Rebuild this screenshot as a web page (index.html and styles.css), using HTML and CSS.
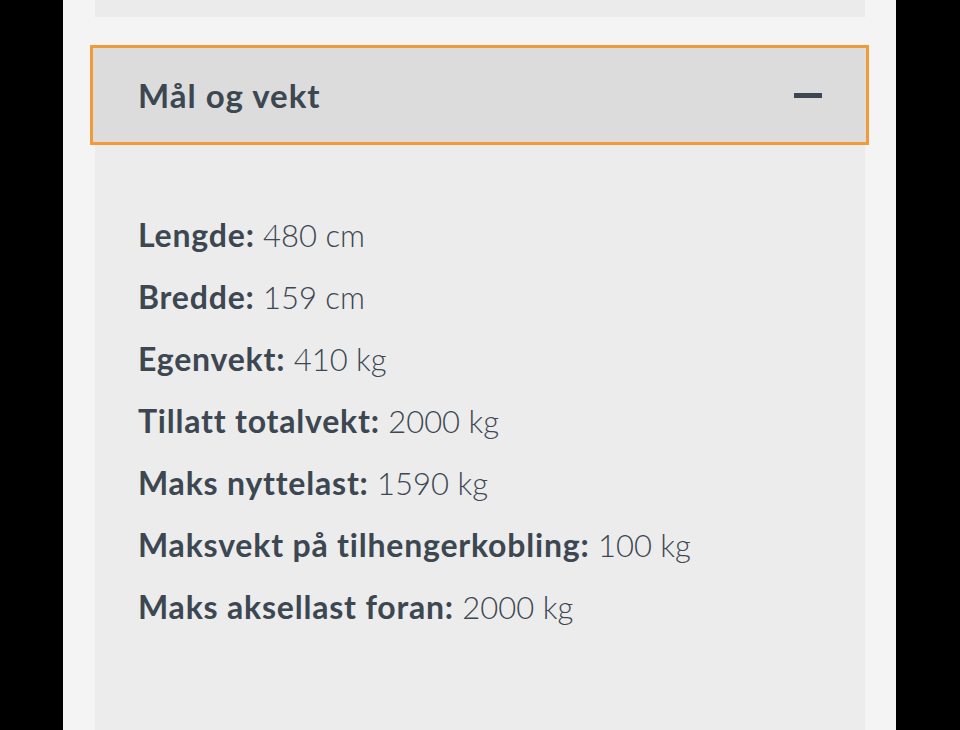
FILE: index.html
```html
<!DOCTYPE html>
<html lang="no">
<head>
<meta charset="utf-8">
<link rel="stylesheet" href="styles.css">
</head>
<body>
<div class="page">
  <div class="prev-panel"></div>
  <section class="accordion">
    <div class="acc-header">
      <h2 class="acc-title">Mål og vekt</h2>
      <span class="acc-minus"></span>
    </div>
    <div class="acc-body">
      <p class="spec"><b>Lengde:</b> 480 cm</p>
      <p class="spec"><b>Bredde:</b> 159 cm</p>
      <p class="spec"><b>Egenvekt:</b> 410 kg</p>
      <p class="spec"><b>Tillatt totalvekt:</b> 2000 kg</p>
      <p class="spec"><b>Maks nyttelast:</b> 1590 kg</p>
      <p class="spec"><b>Maksvekt på tilhengerkobling:</b> 100 kg</p>
      <p class="spec"><b>Maks aksellast foran:</b> 2000 kg</p>
    </div>
  </section>
</div>
</body>
</html>
```

FILE: styles.css
```css
html, body {
  margin: 0;
  padding: 0;
  background: #000;
  height: 730px;
  overflow: hidden;
}
.page {
  margin: 0 64px 0 63px;
  width: 833px;
  height: 730px;
  background: #f4f4f4;
  padding: 0 31px 0 32px;
  box-sizing: border-box;
  display: flex;
  flex-direction: column;
  font-family: Lato, "Noto Sans", sans-serif;
  color: #3c4751;
}
.prev-panel {
  height: 17px;
  background: #ebebeb;
}
.accordion {
  margin-top: 28px;
  display: flex;
  flex-direction: column;
  flex: 1;
}
.acc-header {
  margin: 0 -4px 0 -5px;
  height: 100px;
  box-sizing: border-box;
  border: 3px solid #f09a3a;
  background: #dcdcdc;
  display: flex;
  align-items: center;
  justify-content: space-between;
  padding: 0 44px 0 45px;
}
.acc-title {
  margin: 0;
  font-size: 33px;
  font-weight: 700;
  letter-spacing: 1px;
}
.acc-minus {
  width: 28px;
  height: 5px;
  background: #3c4751;
}
.acc-body {
  flex: 1;
  background: #ececec;
  padding: 69px 43px 0 43px;
}
.spec {
  margin: 0;
  height: 62px;
  font-size: 31px;
  line-height: 42px;
  font-weight: 300;
}
.spec b {
  font-size: 32px;
  font-weight: 700;
  letter-spacing: 0.8px;
}
```
